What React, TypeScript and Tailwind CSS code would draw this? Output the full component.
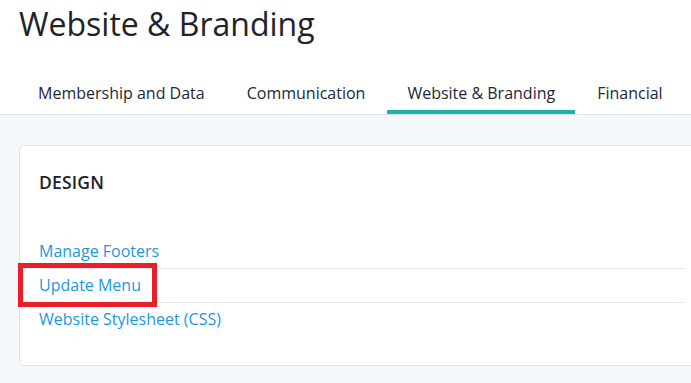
import React from 'react';

const tabs = ['Membership and Data', 'Communication', 'Website & Branding', 'Financial'];
const links = ['Manage Footers', 'Update Menu', 'Website Stylesheet (CSS)'];

export default function App() {
  const active = 'Website & Branding';

  return (
    <div
      className="w-[691px] h-[383px] overflow-hidden bg-[#f5f9fc]"
      style={{ fontFamily: '"Open Sans", "Noto Sans", sans-serif' }}
    >
      <div className="bg-white border-b border-[#dbe3eb]">
        <h1 className="pl-[19px] pt-[5px] text-[32px] leading-[38px] text-[#1f2329] font-normal">
          Website &amp; Branding
        </h1>
        <nav className="flex pl-[18px] mt-[38px] gap-[2px]">
          {tabs.map((tab) => (
            <div
              key={tab}
              className={
                'px-5 pb-[5px] text-[16px] leading-6 text-[#1d2838] whitespace-nowrap border-b-4 ' +
                (tab === active ? 'border-[#1bb3a5]' : 'border-transparent')
              }
            >
              {tab}
            </div>
          ))}
        </nav>
      </div>

      <div className="pt-[30px] pl-[19px]">
        <div className="w-[686px] bg-white border border-[#dde5ec] rounded-[5px] pl-[19px] pr-[20px] pt-[24px] pb-[29px]">
          <h2 className="text-[17.5px] leading-6 font-semibold text-[#1f2329] tracking-[0.2px]">DESIGN</h2>
          <ul className="mt-[41px] divide-y divide-[#e3e8ed]">
            {links.map((link) => (
              <li key={link} className="relative pt-1 pb-[5px]">
                <a className="text-[16px] leading-6 text-[#1b98e0]" href="#">
                  {link}
                </a>
                {link === 'Update Menu' && (
                  <span className="absolute -left-[21px] -top-[6px] w-[139px] h-[44px] border-[5px] border-[#e81f29]" />
                )}
              </li>
            ))}
          </ul>
        </div>
      </div>
    </div>
  );
}
